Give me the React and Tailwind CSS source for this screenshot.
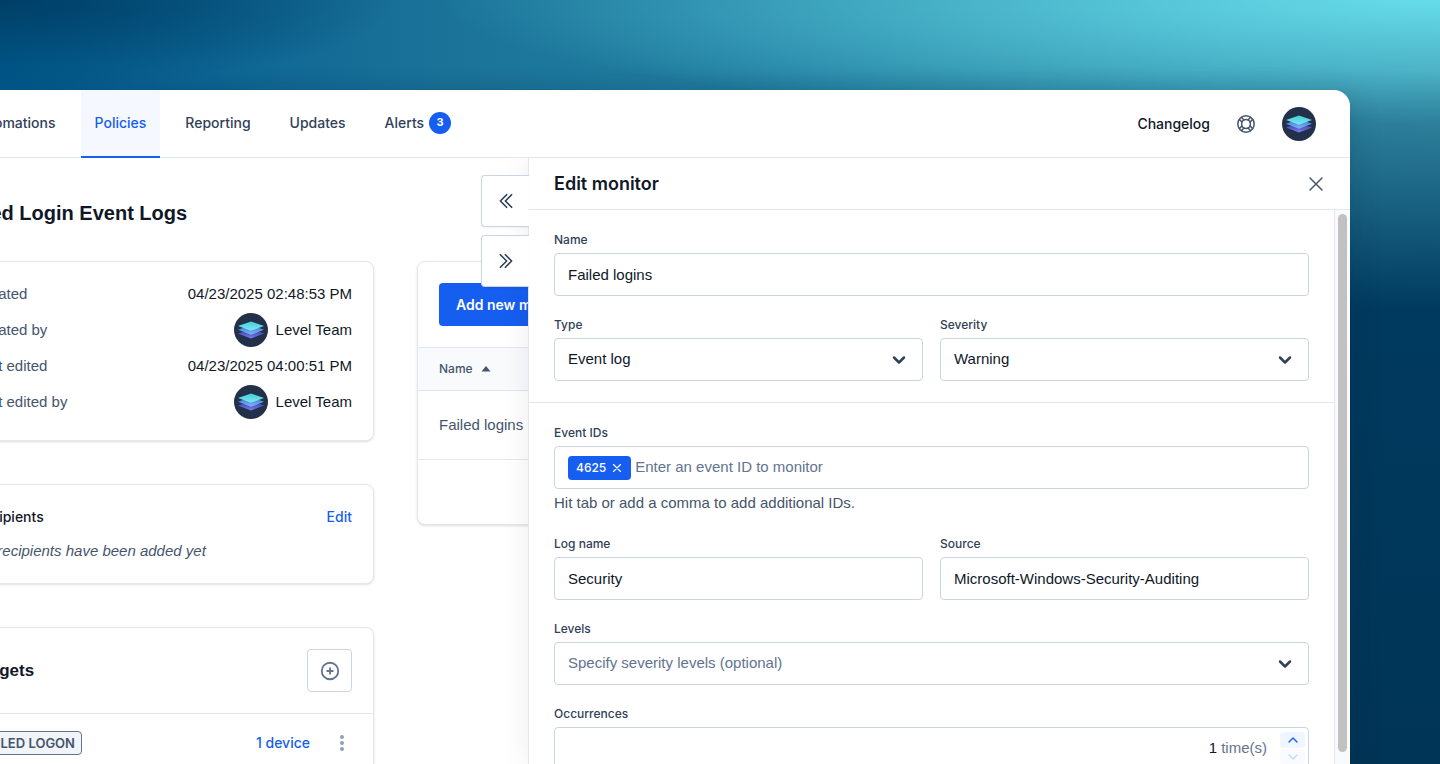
import { useState } from "react";
import { ChevronDown, ChevronUp } from "lucide-react";
import {
  HiOutlineChevronDoubleLeft,
  HiOutlineChevronDoubleRight,
  HiOutlinePlusCircle,
  HiOutlineXMark,
} from "react-icons/hi2";

const NAV = [
  { label: "Automations" },
  { label: "Policies", active: true },
  { label: "Reporting" },
  { label: "Updates" },
  { label: "Alerts", count: 3 },
];

const DETAILS = [
  { label: "Created", value: "04/23/2025 02:48:53 PM" },
  { label: "Created by", value: "Level Team", avatar: true },
  { label: "Last edited", value: "04/23/2025 04:00:51 PM" },
  { label: "Last edited by", value: "Level Team", avatar: true },
];

function Avatar() {
  return (
    <svg viewBox="0 0 34 34" className="size-[34px] shrink-0" aria-hidden="true">
      <defs>
        <linearGradient id="layer-top" x1="0" y1="0" x2="0" y2="1">
          <stop offset="0" stopColor="#3fd0d4" />
          <stop offset="1" stopColor="#84e4f7" />
        </linearGradient>
        <linearGradient id="layer-mid" x1="0" y1="0" x2="0" y2="1">
          <stop offset="0.4" stopColor="#4f8fdc" />
          <stop offset="1" stopColor="#86b4fb" />
        </linearGradient>
        <linearGradient id="layer-low" x1="0" y1="0" x2="0" y2="1">
          <stop offset="0.4" stopColor="#4b52b8" />
          <stop offset="1" stopColor="#7f80f2" />
        </linearGradient>
      </defs>
      <circle cx="17" cy="17" r="17" fill="#22304a" />
      <path d="M4 20.500 17 16l13 4.500L17 25.500z" fill="url(#layer-low)" />
      <path d="M4 16.800 17 12l13 4.800L17 21.800z" fill="url(#layer-mid)" />
      <path d="M4 13 17 8.500 30 13l-13 4.800z" fill="url(#layer-top)" />
    </svg>
  );
}

function HelpIcon() {
  return (
    <svg viewBox="0 0 20 20" className="size-5" fill="none" stroke="currentColor" strokeWidth="1.5" strokeLinecap="round" aria-hidden="true">
      <circle cx="10" cy="10" r="8.200" />
      <circle cx="10" cy="10" r="4.400" />
      <path d="M6 8 3.200 5.400M8 6 5.400 3.200M14 8l2.800-2.600M12 6l2.600-2.800M6 12l-2.800 2.600M8 14l-2.600 2.800M14 12l2.800 2.600M12 14l2.600 2.800" />
    </svg>
  );
}

function Card({ className = "", children }) {
  return (
    <section className={`rounded-lg border border-slate-200 bg-white shadow-sm ${className}`}>
      {children}
    </section>
  );
}

function Field({ id, label, children }) {
  return (
    <div className="min-w-0 flex-1">
      <label htmlFor={id} className="mb-1 block font-['Inter',sans-serif] text-xs leading-[18px] font-medium text-slate-700">
        {label}
      </label>
      {children}
    </div>
  );
}

function TextField({ id, label, value }) {
  return (
    <Field id={id} label={label}>
      <input
        id={id}
        defaultValue={value}
        className="block h-[43px] w-full rounded border border-slate-300 bg-white px-[13px] text-[15px] text-gray-900"
      />
    </Field>
  );
}

function SelectField({ id, label, options, muted }) {
  return (
    <Field id={id} label={label}>
      <div className="relative">
        <select
          id={id}
          className={`block h-[43px] w-full appearance-none rounded border border-slate-300 bg-white px-[13px] text-[15px] ${muted ? "text-slate-500" : "text-gray-900"}`}
        >
          {options.map((option) => (
            <option key={option}>{option}</option>
          ))}
        </select>
        <ChevronDown
          className="pointer-events-none absolute top-3 right-[14px] size-5 text-slate-700"
          strokeWidth={3}
        />
      </div>
    </Field>
  );
}

function Header() {
  return (
    <header className="flex h-[68px] shrink-0 items-stretch justify-between border-b border-slate-200 font-['Inter',sans-serif] text-sm font-medium">
      <nav className="-ml-[43px] flex gap-[11px]">
        {NAV.map((item) => (
          <a
            key={item.label}
            href="#"
            className={`-mb-px flex items-center border-b-2 px-[14px] ${
              item.active
                ? "border-[#155eef] bg-[#f5f8ff] text-[#155eef]"
                : "border-transparent text-slate-700"
            }`}
          >
            {item.label}
            {item.count && (
              <span className="ml-[5px] flex size-[22px] items-center justify-center rounded-full bg-[#155eef] text-[11px] font-bold text-white">
                {item.count}
              </span>
            )}
          </a>
        ))}
      </nav>
      <div className="flex items-center pr-[34px]">
        <a href="#" className="text-gray-900">
          Changelog
        </a>
        <button type="button" aria-label="Help" className="ml-[26px] text-slate-600">
          <HelpIcon />
        </button>
        <button type="button" aria-label="Account" className="ml-[26px]">
          <Avatar />
        </button>
      </div>
    </header>
  );
}

function Sidebar() {
  return (
    <div className="-ml-12 w-[422px] shrink-0 pt-[39px]">
      <h1 className="ml-1 text-xl leading-8 font-bold whitespace-nowrap text-gray-900">
        Failed Login Event Logs
      </h1>
      <Card className="mt-8 px-[21px] pt-[14px] pb-5">
        <dl>
          {DETAILS.map((row) => (
            <div key={row.label} className="flex h-9 items-center justify-between text-[15px]">
              <dt className="text-slate-600">{row.label}</dt>
              <dd className="flex items-center gap-2 text-gray-900">
                {row.avatar && <Avatar />}
                {row.value}
              </dd>
            </div>
          ))}
        </dl>
      </Card>
      <Card className="mt-[43px] px-[21px] py-5">
        <div className="flex justify-between font-['Inter',sans-serif] text-sm leading-6 font-medium">
          <h2 className="text-gray-900">Recipients</h2>
          <a href="#" className="text-[#155eef]">Edit</a>
        </div>
        <p className="mt-[10px] text-[15px] leading-6 text-slate-600 italic">No recipients have been added yet</p>
      </Card>
      <Card className="mt-[43px]">
        <div className="flex items-center justify-between px-[21px] py-[21px]">
          <h2 className="text-[17px] font-bold text-gray-900">Targets</h2>
          <button
            type="button"
            aria-label="Add target"
            className="flex h-[43px] w-[45px] items-center justify-center rounded border border-slate-300 text-slate-500"
          >
            <HiOutlinePlusCircle className="size-[22px]" strokeWidth={2} />
          </button>
        </div>
        <div className="flex h-[59px] items-center border-t border-slate-200 px-[21px] font-['Inter',sans-serif]">
          <span className="rounded border border-slate-500 bg-slate-100 px-[6px] text-[13px] leading-[22px] font-semibold text-slate-600">
            FAILED LOGON
          </span>
          <a href="#" className="ml-auto text-sm font-medium text-[#155eef]">1 device</a>
          <button type="button" aria-label="More" className="ml-[22px] text-slate-400">
            <svg viewBox="0 0 20 20" className="size-5" fill="currentColor">
              <circle cx="10" cy="4" r="2" />
              <circle cx="10" cy="10" r="2" />
              <circle cx="10" cy="16" r="2" />
            </svg>
          </button>
        </div>
      </Card>
    </div>
  );
}

function Monitors() {
  return (
    <Card className="mt-[103px] ml-[43px] h-[264px] w-[760px] shrink-0">
      <div className="px-[21px] py-[21px]">
        <button type="button" className="h-[43px] rounded bg-[#155eef] px-[17px] font-['Inter',sans-serif] text-sm font-semibold text-white">
          Add new monitor
        </button>
      </div>
      <table className="w-full text-left">
        <thead>
          <tr className="h-[43px] border-y border-slate-200 bg-slate-50 text-slate-600">
            <th className="px-[21px] font-['Inter',sans-serif] text-xs font-medium">
              <span className="flex items-center gap-2">
                Name
                <svg viewBox="0 0 10 6" className="h-[6px] w-[10px]" fill="currentColor">
                  <path d="M5 0 9.500 5.500h-9z" />
                </svg>
              </span>
            </th>
          </tr>
        </thead>
        <tbody>
          <tr className="h-[69px] border-b border-slate-200 text-[15px] text-slate-600">
            <td className="px-[21px]">Failed logins</td>
          </tr>
        </tbody>
      </table>
    </Card>
  );
}

function Panel() {
  const [tags, setTags] = useState(["4625"]);

  return (
    <aside className="absolute inset-y-0 right-0 flex w-[822px] flex-col border-l border-slate-200 bg-white shadow-[0_0_28px_rgba(15,23,42,0.08)]">
      {/* prev / next tabs hang off the left edge */}
      <div className="absolute top-[17px] right-full flex flex-col gap-2">
        <button type="button" aria-label="Previous monitor" className="flex h-[52px] w-12 items-center justify-center rounded-l border border-r-0 border-slate-300 bg-white text-slate-700 shadow-xs">
          <HiOutlineChevronDoubleLeft className="size-5" strokeWidth={2} />
        </button>
        <button type="button" aria-label="Next monitor" className="flex h-[52px] w-12 items-center justify-center rounded-l border border-r-0 border-slate-300 bg-white text-slate-700 shadow-xs">
          <HiOutlineChevronDoubleRight className="size-5" strokeWidth={2} />
        </button>
      </div>
      <div className="flex h-[52px] shrink-0 items-center justify-between border-b border-slate-200 pr-[22px] pl-[25px]">
        <h2 className="font-['Inter',sans-serif] text-lg font-semibold text-gray-900">Edit monitor</h2>
        <button type="button" aria-label="Close" className="text-slate-600">
          <HiOutlineXMark className="size-6" />
        </button>
      </div>
      <div className="flex min-h-0 flex-1">
        <form className="min-w-0 flex-1">
          <div className="flex flex-col gap-5 border-b border-slate-200 px-[25px] py-[21px]">
            <TextField id="name" label="Name" value="Failed logins" />
            <div className="flex gap-[17px]">
              <SelectField id="type" label="Type" options={["Event log"]} />
              <SelectField id="severity" label="Severity" options={["Warning"]} />
            </div>
          </div>
          <div className="flex flex-col gap-5 px-[25px] py-[21px]">
            <Field id="event-ids" label="Event IDs">
              <div className="flex h-[43px] items-center rounded border border-slate-300 px-[13px]">
                {tags.map((tag) => (
                  <span key={tag} className="mr-1 flex h-6 items-center gap-1 rounded bg-[#155eef] pr-[7px] pl-2 font-['Inter',sans-serif] text-xs font-medium text-white">
                    {tag}
                    <button
                      type="button"
                      aria-label={`Remove ${tag}`}
                      onClick={() => setTags(tags.filter((t) => t !== tag))}
                    >
                      <HiOutlineXMark className="size-[14px]" strokeWidth={2} />
                    </button>
                  </span>
                ))}
                <input
                  id="event-ids"
                  placeholder="Enter an event ID to monitor"
                  className="min-w-0 flex-1 text-[15px] placeholder:text-slate-500"
                />
              </div>
              <p className="mt-1 pb-0.5 text-[15px] leading-5 text-slate-600">
                Hit tab or add a comma to add additional IDs.
              </p>
            </Field>
            <div className="flex gap-[17px]">
              <TextField id="log-name" label="Log name" value="Security" />
              <TextField id="source" label="Source" value="Microsoft-Windows-Security-Auditing" />
            </div>
            <SelectField id="levels" label="Levels" options={["Specify severity levels (optional)"]} muted />
            <Field id="occurrences" label="Occurrences">
              <div className="flex h-[43px] items-center rounded border border-slate-300 pr-[3px] text-[15px]">
                <input id="occurrences" defaultValue="1" className="min-w-0 flex-1 text-right text-gray-900" />
                <span className="ml-1 text-slate-500">time(s)</span>
                <div className="ml-[13px] flex flex-col gap-px">
                  <button type="button" aria-label="Increase" className="flex h-4 w-[25px] items-center justify-center rounded bg-blue-50 text-[#155eef]">
                    <ChevronUp className="size-4" />
                  </button>
                  <button type="button" aria-label="Decrease" className="flex h-4 w-[25px] items-center justify-center rounded bg-blue-50/40 text-blue-200">
                    <ChevronDown className="size-4" />
                  </button>
                </div>
              </div>
            </Field>
          </div>
        </form>
        <div className="w-4 shrink-0 border-l border-gray-200 bg-gray-50 px-[3px] pt-1 pb-3">
          <div className="h-full rounded-full bg-[#c1c1c1]" />
        </div>
      </div>
    </aside>
  );
}

export default function App() {
  return (
    <div className="h-screen overflow-hidden bg-[radial-gradient(ellipse_400px_90px_at_0%_0%,#003f66,rgba(0,63,102,0)),linear-gradient(to_bottom,rgba(0,58,95,0)_70px,#003a5f_310px,#003556_100%),radial-gradient(ellipse_1000px_125px_at_100%_0%,#66dcea,rgba(102,220,234,0)),linear-gradient(to_right,#005a8e,#1a7299_30%,#2583a3_60%,#3290ab_85%,#3a93ab)] pt-[90px] pr-[90px] font-['Liberation_Sans',Arial,sans-serif]">
      <div className="flex h-full flex-col overflow-hidden rounded-tr-2xl bg-white shadow-[0_8px_32px_rgba(0,30,50,0.2)]">
        <Header />
        <main className="relative flex min-h-0 flex-1 items-start overflow-hidden">
          <Sidebar />
          <Monitors />
          <Panel />
        </main>
      </div>
    </div>
  );
}
